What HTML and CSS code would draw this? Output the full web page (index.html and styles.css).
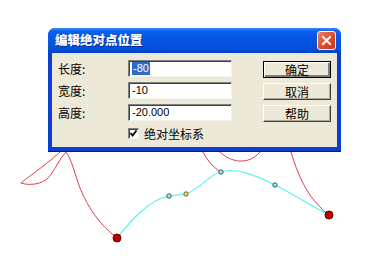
FILE: index.html
```html
<!DOCTYPE html>
<html>
<head>
<meta charset="utf-8">
<link rel="stylesheet" href="styles.css">
</head>
<body>
<div class="desk">
  <svg class="curves" width="367" height="266" viewBox="0 0 367 266">
    <g fill="none" stroke="#e04050" stroke-width="1">
      <path d="M62,150 C50,162 32,174 21,183 C30,186 42,184 48,178 C55,170 60,158 66,152"/>
      <path d="M66,152 C72,160 75,175 80,188 C88,208 100,225 117,238"/>
      <path d="M203,152 C207,160 212,166 219,171"/>
      <path d="M220,152 C230,162 248,166 260,152"/>
      <path d="M291,152 C295,165 300,180 310,195 C316,203 322,210 329,215"/>
    </g>
    <path fill="none" stroke="#60f0f0" stroke-width="1.2" d="M117,238 C130,222 148,200 169,196 C176,195 181,195 186,194 C200,189 210,174 221,172 C235,167 255,175 275,185 C295,195 310,205 329,215"/>
    <g stroke="#206060" stroke-width="1" fill="#a0f0f0">
      <circle cx="169" cy="196" r="2.2"/>
      <circle cx="221" cy="172" r="2.2"/>
      <circle cx="275" cy="185" r="2.2"/>
    </g>
    <circle cx="186" cy="194" r="2.2" fill="#e0e060" stroke="#806020"/>
    <circle cx="117" cy="238" r="4" fill="#c00000" stroke="#600000"/>
    <circle cx="329" cy="215" r="4" fill="#c00000" stroke="#600000"/>
  </svg>

  <div class="dialog">
    <div class="titlebar">
      <span class="title">编辑绝对点位置</span>
      <span class="close">
        <svg width="17" height="17" viewBox="0 0 17 17">
          <path d="M5,5 L12,12 M12,5 L5,12" stroke="#fff" stroke-width="2" stroke-linecap="square"/>
        </svg>
      </span>
    </div>
    <div class="body">
      <div class="fields">
        <div class="row"><span class="label">长度:</span><div class="input"><span class="sel">-80</span></div></div>
        <div class="row"><span class="label">宽度:</span><div class="input">-10</div></div>
        <div class="row"><span class="label">高度:</span><div class="input">-20.000</div></div>
        <div class="check-row">
          <span class="checkbox">
            <svg width="9" height="9" viewBox="0 0 9 9"><path d="M1.5,4 L3.5,6.5 L7.5,1.5" fill="none" stroke="#000" stroke-width="1.8"/></svg>
          </span>
          <span class="check-label">绝对坐标系</span>
        </div>
      </div>
      <div class="buttons">
        <div class="btn default"><span>确定</span></div>
        <div class="btn"><span>取消</span></div>
        <div class="btn"><span>帮助</span></div>
      </div>
    </div>
  </div>
</div>
</body>
</html>
```
FILE: styles.css
```css
html, body {
  margin: 0;
  padding: 0;
  background: #ffffff;
}
.desk {
  position: relative;
  width: 367px;
  height: 266px;
  overflow: hidden;
  font-family: "Noto Sans CJK SC", "DejaVu Sans", sans-serif;
}
.curves {
  position: absolute;
  left: 0;
  top: 0;
}
.dialog {
  position: absolute;
  left: 48px;
  top: 28px;
  width: 293px;
  height: 124px;
  box-sizing: border-box;
  background: #0a3fd0;
  border-radius: 7px 7px 0 0;
  padding: 0 4px 4px 4px;
  display: flex;
  flex-direction: column;
  border-bottom: 1px solid #001a80;
}
.titlebar {
  height: 25px;
  margin: 0 -4px;
  padding: 0 4px 0 7px;
  border-radius: 7px 7px 0 0;
  background: linear-gradient(to bottom, #3a8cf8 0%, #0a60f0 12%, #0456e4 50%, #0450dc 85%, #0340c8 100%);
  display: flex;
  align-items: center;
  justify-content: space-between;
}
.title {
  color: #ffffff;
  font-size: 12.5px;
  font-weight: 900;
  text-shadow: 1px 1px 0 #0a2a90;
  line-height: 1;
}
.close {
  width: 17px;
  height: 17px;
  margin-right: 1px;
  border: 1px solid #ffffff;
  border-radius: 3px;
  background: linear-gradient(135deg, #f08060 0%, #e05030 50%, #c83818 100%);
  display: flex;
  align-items: center;
  justify-content: center;
}
.body {
  flex: 1;
  background: #ece9d8;
  display: flex;
  padding: 7px 6px 0 6px;
  gap: 31px;
  font-size: 12px;
  color: #000;
}
.fields {
  display: flex;
  flex-direction: column;
  gap: 5px;
}
.row {
  display: flex;
  align-items: center;
  height: 17px;
}
.label {
  width: 70px;
  font-size: 12px;
  line-height: 17px;
}
.input {
  width: 104px;
  height: 17px;
  box-sizing: border-box;
  background: #ffffff;
  border-top: 1px solid #808080;
  border-left: 1px solid #808080;
  border-right: 1px solid #f4f3ee;
  border-bottom: 1px solid #f4f3ee;
  box-shadow: inset 1px 1px 0 #404040;
  padding: 0 2px 0 3px;
  font-family: "Liberation Sans", "DejaVu Sans", sans-serif;
  font-size: 11px;
  line-height: 15px;
  white-space: nowrap;
}
.sel {
  background: #316ac5;
  color: #ffffff;
  display: inline-block;
  line-height: 13px;
  padding: 0 1px;
}
.check-row {
  display: flex;
  align-items: center;
  margin-left: 70px;
  height: 15px;
  gap: 5px;
}
.checkbox {
  width: 11px;
  height: 11px;
  box-sizing: border-box;
  background: #fff;
  border-top: 1px solid #808080;
  border-left: 1px solid #808080;
  border-right: 1px solid #f4f3ee;
  border-bottom: 1px solid #f4f3ee;
  box-shadow: inset 1px 1px 0 #404040;
  display: flex;
  align-items: center;
  justify-content: center;
}
.check-label {
  font-size: 12px;
}
.buttons {
  display: flex;
  flex-direction: column;
  gap: 5px;
  margin-top: 1px;
}
.btn {
  width: 68px;
  height: 17px;
  box-sizing: border-box;
  background: #ece9d8;
  border-top: 1px solid #ffffff;
  border-left: 1px solid #ffffff;
  border-right: 1px solid #404040;
  border-bottom: 1px solid #404040;
  box-shadow: inset -1px -1px 0 #aca899;
  display: flex;
  align-items: center;
  justify-content: center;
  font-size: 12px;
}
.btn.default {
  border: 1px solid #000;
  box-shadow: inset 1px 1px 0 #fff, inset -2px -2px 0 #808080;
}
```
